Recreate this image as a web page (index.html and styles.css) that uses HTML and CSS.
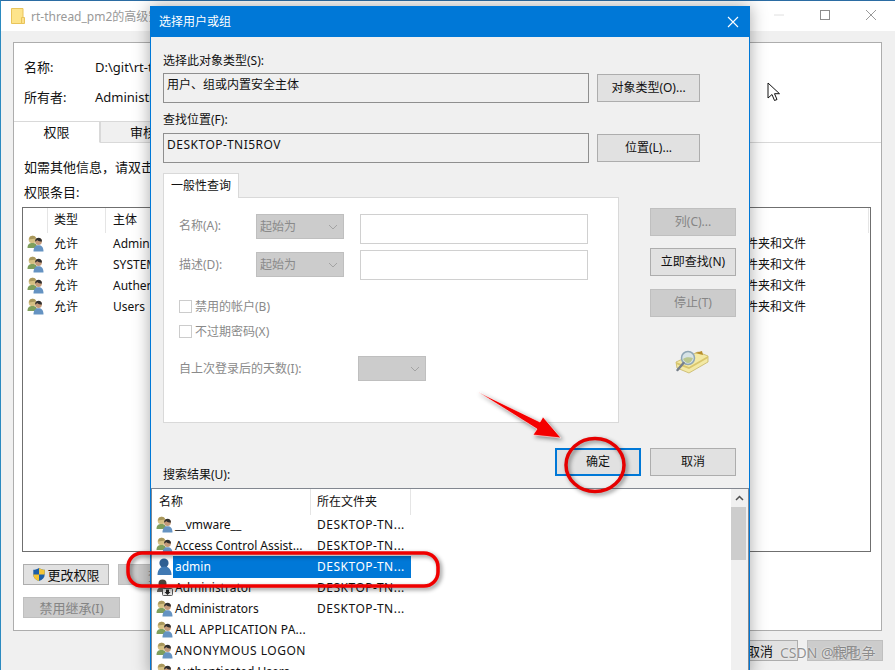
FILE: index.html
```html
<!DOCTYPE html>
<html lang="zh-CN">
    <head>
        <meta charset="UTF-8">
        <title>选择用户或组</title>
        <link rel="stylesheet" href="styles.css">
    </head>
    <body>
        <svg class="sprite" width="0" height="0">
            <symbol id="ico-group" viewBox="0 0 17 17">
                <circle cx="5.500" cy="4.500" r="3.800" fill="#d5c083"/>
                <path d="M2 4.500C2.300 1.800 4 .8 5.800.8 7.500.8 8.800 1.800 9 3.500 7 4 4 4.200 2 4.500z" fill="#a8975c"/>
                <path d="M.5 13c0-3.800 2-5 5-5s4.500 1.200 4.500 5z" fill="#7f9f5c"/>
                <circle cx="11.500" cy="6.500" r="3.400" fill="#c49a7a"/>
                <path d="M8 6.500C8.200 3.800 10 2.800 11.700 2.800s3.300 1.200 3.300 3.600c-1.800 0-3.900-.5-4.900-1.500C9.700 5.700 9 6.300 8 6.500z" fill="#2e2e2e"/>
                <path d="M6.500 16.500c0-4.500 2-6.300 5-6.300s5 1.800 5 6.300z" fill="#6593c2"/>
            </symbol>
            <symbol id="ico-user" viewBox="0 0 17 17">
                <circle cx="8" cy="5" r="4.600" fill="#2f5f92"/>
                <path d="M1.500 17c0-5.500 3-8.500 7-8.500s7 3 7 8.500z" fill="#4079b3"/>
            </symbol>
            <symbol id="ico-admin" viewBox="0 0 17 17">
                <circle cx="6.500" cy="4.500" r="4" fill="#4d453c"/>
                <path d="M1 13c0-3.500 2.200-5 5.500-5S12 9.500 12 13z" fill="#66635f"/>
                <rect x="6.500" y="9.500" width="10" height="7" rx="1" fill="#e8e8e8" stroke="#555"/>
                <path d="M10 10.500h3v2.500h1.500l-3 3-3-3H10z" fill="#222"/>
            </symbol>
            <symbol id="ico-shield" viewBox="0 0 16 16">
                <path d="M8 .5c2 1.500 4 2 6.500 2v5.500c0 3.500-2.500 6-6.500 7.500-4-1.500-6.500-4-6.500-7.500V2.500c2.500 0 4.500-.5 6.500-2z" fill="#1c5fa8"/>
                <path d="M8 .5v7.500h6.500V2.500c-2.500 0-4.500-.5-6.500-2zM8 8H1.500c0 3.500 2.500 6 6.500 7.500z" fill="#f5c534"/>
            </symbol>
            <symbol id="ico-find" viewBox="0 0 34 24">
                <path d="M1 12l22-10 10 4v6L14 23 2 18z" fill="#f3e9a5" stroke="#c6b566" stroke-width=".8"/>
                <path d="M1 12l13 5 19-11v2L14 19 1 14z" fill="#d9c66c"/>
                <path d="M20 3l7-2 1 4z" fill="#b88f2c"/>
                <circle cx="13" cy="8" r="6.500" fill="#d7e3e6" stroke="#8fa6b5" stroke-width="1.500"/>
                <path d="M8 9c2-2 7-2 10-1-1 3-3 5-5 5s-4-2-5-4z" fill="#b9c78f"/>
                <path d="M8.500 13L2.500 20" stroke="#77808a" stroke-width="2.500" stroke-linecap="round"/>
            </symbol>
            <symbol id="ico-folder" viewBox="0 0 14 16">
                <path d="M.5.500H12V15.500H.5z" fill="#fde48b" stroke="#e9c45a"/>
                <path d="M10.500 9.500h3v6h-3z" fill="#fbe08a" stroke="#e9c45a"/>
            </symbol>
            <symbol id="ico-chev" viewBox="0 0 10 6">
                <path d="M1 1l4 4 4-4" fill="none" stroke="#a3a3a3"/>
            </symbol>
        </svg>

        <div class="escritorio">
            <!-- ventana de atras -->
            <div class="ventana-atras">
                <div class="barra-atras">
                    <svg class="ico-folder"><use href="#ico-folder"/></svg>
                    <span class="titulo-atras">rt-thread_pm2的高级安全设置</span>
                    <span class="controles">
                        <svg width="12" height="12" viewBox="0 0 12 12"><path d="M1 6h10" stroke="#e0e0e0"/></svg>
                        <svg width="12" height="12" viewBox="0 0 12 12"><rect x="1.500" y="1.500" width="9" height="9" fill="none" stroke="#8c8c8c"/></svg>
                        <svg width="12" height="12" viewBox="0 0 12 12"><path d="M1 1l10 10M11 1L1 11" stroke="#9a9a9a"/></svg>
                    </span>
                </div>
                <div class="panel">
                    <div class="fila-info">
                        <span class="info-label">名称:</span><span>D:\git\rt-thread_pm2</span>
                    </div>
                    <div class="fila-info">
                        <span class="info-label">所有者:</span><span>Administrators</span>
                    </div>
                    <div class="tabs-atras">
                        <div class="tab-atras activo">权限</div>
                        <div class="tab-atras">审核</div>
                    </div>
                    <p class="texto ayuda">如需其他信息，请双击权限项目。</p>
                    <p class="texto entradas">权限条目:</p>
                    <div class="tabla">
                        <div class="tabla-cab">
                            <span class="c-ico"></span>
                            <span class="c-tipo">类型</span>
                            <span class="c-sujeto">主体</span>
                        </div>
                        <div class="tabla-fila">
                            <span class="c-ico"><svg class="ico"><use href="#ico-group"/></svg></span>
                            <span class="c-tipo">允许</span>
                            <span class="c-sujeto">Administrators</span>
                            <span class="c-aplica">此文件夹、子文件夹和文件</span>
                        </div>
                        <div class="tabla-fila">
                            <span class="c-ico"><svg class="ico"><use href="#ico-group"/></svg></span>
                            <span class="c-tipo">允许</span>
                            <span class="c-sujeto">SYSTEM</span>
                            <span class="c-aplica">此文件夹、子文件夹和文件</span>
                        </div>
                        <div class="tabla-fila">
                            <span class="c-ico"><svg class="ico"><use href="#ico-group"/></svg></span>
                            <span class="c-tipo">允许</span>
                            <span class="c-sujeto">Authenticated Users</span>
                            <span class="c-aplica">此文件夹、子文件夹和文件</span>
                        </div>
                        <div class="tabla-fila">
                            <span class="c-ico"><svg class="ico"><use href="#ico-group"/></svg></span>
                            <span class="c-tipo">允许</span>
                            <span class="c-sujeto">Users</span>
                            <span class="c-aplica">此文件夹、子文件夹和文件</span>
                        </div>
                    </div>
                    <div class="botones-tabla">
                        <button type="button" class="boton boton-cambiar"><svg class="ico-shield"><use href="#ico-shield"/></svg>更改权限</button>
                        <button type="button" class="boton apagado boton-ver">查看</button>
                    </div>
                    <button type="button" class="boton apagado boton-herencia">禁用继承(I)</button>
                </div>
                <div class="pie-atras">
                    <button type="button" class="boton boton-pie">确定</button>
                    <button type="button" class="boton boton-pie">取消</button>
                    <button type="button" class="boton apagado boton-pie">应用</button>
                </div>
            </div>

            <!-- dialogo -->
            <div class="dialogo">
                <div class="barra-dialogo">
                    <span>选择用户或组</span>
                    <svg width="12" height="12" viewBox="0 0 12 12"><path d="M1 1l10 10M11 1L1 11" stroke="#fff" stroke-width="1.100"/></svg>
                </div>
                <div class="cuerpo">
                    <p class="etiqueta">选择此对象类型(S):</p>
                    <div class="fila-campo">
                        <div class="campo">用户、组或内置安全主体</div>
                        <button type="button" class="boton boton-campo">对象类型(O)...</button>
                    </div>
                    <p class="etiqueta etiqueta-2">查找位置(F):</p>
                    <div class="fila-campo fila-campo-2">
                        <div class="campo mayus">DESKTOP-TNI5ROV</div>
                        <button type="button" class="boton boton-campo">位置(L)...</button>
                    </div>
                    <div class="medio">
                        <div class="consulta">
                            <div class="tab-consulta">一般性查询</div>
                            <div class="pane">
                                <div class="fila-form">
                                    <span class="form-label">名称(A):</span>
                                    <div class="selector"><span>起始为</span><svg class="chev"><use href="#ico-chev"/></svg></div>
                                    <div class="entrada"></div>
                                </div>
                                <div class="fila-form fila-form-2">
                                    <span class="form-label">描述(D):</span>
                                    <div class="selector"><span>起始为</span><svg class="chev"><use href="#ico-chev"/></svg></div>
                                    <div class="entrada"></div>
                                </div>
                                <div class="checks">
                                    <div class="check"><span class="caja"></span>禁用的帐户(B)</div>
                                    <div class="check"><span class="caja"></span>不过期密码(X)</div>
                                </div>
                                <div class="fila-dias">
                                    <span class="dias-label">自上次登录后的天数(I):</span>
                                    <div class="selector selector-dias"><span></span><svg class="chev"><use href="#ico-chev"/></svg></div>
                                </div>
                            </div>
                        </div>
                        <div class="acciones">
                            <button type="button" class="boton apagado boton-lado">列(C)...</button>
                            <button type="button" class="boton boton-lado">立即查找(N)</button>
                            <button type="button" class="boton apagado boton-lado">停止(T)</button>
                            <svg class="ico-find"><use href="#ico-find"/></svg>
                        </div>
                    </div>
                    <div class="pie-dialogo">
                        <span class="etiqueta-resultados">搜索结果(U):</span>
                        <div class="pie-botones">
                            <button type="button" class="boton boton-lado boton-ok">确定</button>
                            <button type="button" class="boton boton-lado">取消</button>
                        </div>
                    </div>
                </div>
                <div class="lista">
                    <div class="lista-main">
                        <div class="lista-cab">
                            <span class="cab-nombre">名称</span>
                            <span class="cab-carpeta">所在文件夹</span>
                        </div>
                        <div class="lista-fila">
                            <span class="l-ico"><svg class="ico"><use href="#ico-group"/></svg></span>
                            <span class="l-nombre">__vmware__</span>
                            <span class="l-carpeta mayus">DESKTOP-TN...</span>
                        </div>
                        <div class="lista-fila">
                            <span class="l-ico"><svg class="ico"><use href="#ico-group"/></svg></span>
                            <span class="l-nombre">Access Control Assist...</span>
                            <span class="l-carpeta mayus">DESKTOP-TN...</span>
                        </div>
                        <div class="lista-fila elegida">
                            <span class="l-ico"><svg class="ico"><use href="#ico-user"/></svg></span>
                            <span class="l-nombre">admin</span>
                            <span class="l-carpeta mayus">DESKTOP-TN...</span>
                        </div>
                        <div class="lista-fila">
                            <span class="l-ico"><svg class="ico"><use href="#ico-admin"/></svg></span>
                            <span class="l-nombre">Administrator</span>
                            <span class="l-carpeta mayus">DESKTOP-TN...</span>
                        </div>
                        <div class="lista-fila">
                            <span class="l-ico"><svg class="ico"><use href="#ico-group"/></svg></span>
                            <span class="l-nombre">Administrators</span>
                            <span class="l-carpeta mayus">DESKTOP-TN...</span>
                        </div>
                        <div class="lista-fila">
                            <span class="l-ico"><svg class="ico"><use href="#ico-group"/></svg></span>
                            <span class="l-nombre mayus-leve">ALL APPLICATION PA...</span>
                            <span class="l-carpeta"></span>
                        </div>
                        <div class="lista-fila">
                            <span class="l-ico"><svg class="ico"><use href="#ico-group"/></svg></span>
                            <span class="l-nombre mayus">ANONYMOUS LOGON</span>
                            <span class="l-carpeta"></span>
                        </div>
                        <div class="lista-fila">
                            <span class="l-ico"><svg class="ico"><use href="#ico-group"/></svg></span>
                            <span class="l-nombre">Authenticated Users</span>
                            <span class="l-carpeta"></span>
                        </div>
                    </div>
                    <div class="scroll">
                        <div class="scroll-arriba">
                            <svg width="9" height="6" viewBox="0 0 9 6"><path d="M1 5l3.500-3.500L8 5" fill="none" stroke="#505050" stroke-width="1.500"/></svg>
                        </div>
                        <div class="scroll-barra"></div>
                    </div>
                </div>
            </div>

            <!-- marcas rojas encima de la captura -->
            <svg class="marcas" width="895" height="670" viewBox="0 0 895 670">
                <rect x="128" y="553" width="310" height="33" rx="14" fill="none" stroke="#f00000" stroke-width="3.500"/>
                <ellipse cx="595" cy="465" rx="29" ry="26.500" fill="none" stroke="#e60000" stroke-width="3.500"/>
                <path d="M478 392l62 30 3-5 18 21-28-3 4-6z" fill="#f40000" stroke="#fff" stroke-width=".6"/>
            </svg>
            <svg class="cursor" width="14" height="20" viewBox="0 0 14 20">
                <path d="M1 1v15l4-3.500 2.500 6 2.500-1-2.500-5.800h5z" fill="#fff" stroke="#111"/>
            </svg>
            <span class="marca-agua">CSDN @根也争</span>
        </div>
    </body>
</html>
```

FILE: styles.css
```css
* {
    box-sizing: border-box;
    margin: 0;
    padding: 0;
}
body {
    width: 895px;
    height: 670px;
    overflow: hidden;
    font-family: "Noto Sans", "Noto Sans CJK SC", sans-serif;
    font-size: 12px;
    line-height: 16px;
    color: #111;
    background: #fff;
}
button {
    font: inherit;
}
.sprite {
    position: absolute;
}
.escritorio {
    position: relative;
    width: 895px;
    height: 670px;
    overflow: hidden;
}
.mayus {
    letter-spacing: 0.5px;
}
.mayus-leve {
    letter-spacing: 0.2px;
}

/* botones */
.boton {
    display: flex;
    align-items: center;
    justify-content: center;
    background: #e1e1e1;
    border: 1px solid #adadad;
    color: #111;
}
.boton.apagado {
    background: #cccccc;
    border-color: #bfbfbf;
    color: #858585;
}

/* ventana de atras */
.ventana-atras {
    position: absolute;
    left: 0;
    top: 0;
    width: 895px;
    height: 670px;
    background: #f0f0f0;
    border-top: 1px solid #2b6ca3;
    border-left: 1px solid #2b8ac0;
}
.barra-atras {
    display: flex;
    align-items: center;
    height: 30px;
    background: #fff;
    padding-left: 10px;
}
.ico-folder {
    width: 14px;
    height: 16px;
    margin-right: 6px;
}
.titulo-atras {
    color: #999;
    flex: 1;
    padding-top: 2px;
}
.controles {
    display: flex;
    gap: 34px;
    margin-right: 18px;
    margin-top: -2px;
}
.panel {
    margin: 11px 12px 0 12px;
    width: 869px;
    height: 589px;
    background: #fff;
    border: 1px solid #adadad;
    padding-top: 9px;
    font-size: 13px;
}
.fila-info {
    display: flex;
    height: 30px;
    padding-left: 10px;
    padding-top: 7px;
}
.info-label {
    width: 71px;
}
.tabs-atras {
    display: flex;
    height: 22px;
    margin-top: 9px;
    border-bottom: 1px solid #d9d9d9;
}
.tab-atras {
    width: 86px;
    height: 22px;
    text-align: center;
    line-height: 21px;
    background: #f0f0f0;
    border: 1px solid #d9d9d9;
}
.tab-atras.activo {
    background: #fff;
    border-bottom-color: #fff;
    border-left: none;
}
.texto {
    margin-left: 10px;
}
.ayuda {
    margin-top: 16px;
}
.entradas {
    margin-top: 9px;
}
.tabla {
    width: 849px;
    height: 345px;
    margin: 7px 0 0 8px;
    border: 1px solid #6f6f6f;
    font-size: 12px;
}
.tabla-cab {
    display: grid;
    grid-template-columns: 25px 58px 1fr;
    height: 25px;
    line-height: 23px;
    margin-right: 1px;
    border-right: 1px solid #e5e5e5;
}
.tabla-fila {
    display: grid;
    grid-template-columns: 25px 58px 1fr auto;
    height: 21px;
    line-height: 21px;
    padding-right: 64px;
}
.c-ico {
    padding-left: 4px;
    padding-top: 2px;
}
.tabla-cab .c-ico,
.tabla-cab .c-tipo {
    border-right: 1px solid #e5e5e5;
}
.c-tipo {
    padding-left: 6px;
}
.c-sujeto {
    padding-left: 7px;
}
.ico {
    display: block;
    width: 17px;
    height: 17px;
}
.botones-tabla {
    display: flex;
    gap: 9px;
    margin: 12px 0 0 9px;
}
.boton-cambiar {
    width: 86px;
    height: 21px;
}
.ico-shield {
    width: 14px;
    height: 15px;
    margin-right: 1px;
}
.boton-ver {
    width: 86px;
    height: 21px;
}
.boton-herencia {
    width: 97px;
    height: 21px;
    margin: 12px 0 0 9px;
}
.pie-atras {
    display: flex;
    justify-content: flex-end;
    gap: 9px;
    margin: 9px 12px 0 0;
    font-size: 13px;
}
.boton-pie {
    width: 76px;
    height: 21px;
}

/* dialogo */
.dialogo {
    position: absolute;
    left: 150px;
    top: 6px;
    width: 600px;
    height: 670px;
    background: #f0f0f0;
    border: 1px solid #0078d7;
    box-shadow: 0 0 16px rgba(0, 0, 0, 0.35);
}
.barra-dialogo {
    display: flex;
    align-items: center;
    justify-content: space-between;
    height: 30px;
    padding: 0 10px 0 8px;
    background: #0078d7;
    color: #fff;
}
.cuerpo {
    padding: 0 13px 0 12px;
}
.etiqueta {
    padding-top: 16px;
}
.etiqueta-2 {
    padding-top: 9px;
}
.fila-campo {
    display: flex;
    align-items: center;
    gap: 8px;
    margin-top: 4px;
}
.fila-campo-2 {
    margin-top: 5px;
}
.campo {
    width: 426px;
    height: 30px;
    padding: 3px 3px 0;
    border: 1px solid #8f8f8f;
}
.boton-campo {
    width: 103px;
    height: 28px;
    letter-spacing: 0;
}
.medio {
    display: flex;
    gap: 31px;
    margin-top: 10px;
}
.consulta {
    width: 456px;
}
.tab-consulta {
    position: relative;
    width: 76px;
    height: 25px;
    line-height: 23px;
    text-align: center;
    background: #fff;
    border: 1px solid #d9d9d9;
    border-bottom: none;
    z-index: 1;
}
.pane {
    height: 226px;
    margin-top: -1px;
    padding: 16px 0 0 15px;
    background: #fff;
    border: 1px solid #d9d9d9;
    color: #8a8a8a;
}
.fila-form {
    display: flex;
    align-items: flex-start;
}
.fila-form-2 {
    margin-top: 6px;
}
.form-label {
    width: 77px;
    line-height: 23px;
}
.fila-form-2 .form-label {
    margin-top: 3px;
}
.fila-form-2 .selector {
    margin-top: 2px;
}
.selector {
    display: flex;
    align-items: center;
    justify-content: space-between;
    width: 88px;
    height: 25px;
    padding: 0 5px 0 3px;
    background: #cccccc;
    border: 1px solid #bfbfbf;
}
.selector-dias {
    width: 68px;
}
.chev {
    width: 10px;
    height: 6px;
}
.entrada {
    width: 228px;
    height: 30px;
    margin-left: 16px;
    border: 1px solid #d0d0d0;
}
.checks {
    margin-top: 14px;
}
.check {
    display: flex;
    align-items: center;
    height: 25px;
}
.caja {
    width: 13px;
    height: 13px;
    margin-right: 3px;
    border: 1px solid #cccccc;
    background: #fff;
}
.fila-dias {
    display: flex;
    align-items: center;
    margin-top: 12px;
}
.dias-label {
    width: 179px;
    padding-top: 1px;
}
.acciones {
    display: flex;
    flex-direction: column;
    padding-top: 35px;
}
.boton-lado {
    width: 86px;
    height: 28px;
}
.acciones .boton-lado + .boton-lado {
    margin-top: 12px;
}
.acciones .boton-lado:nth-child(3) {
    margin-top: 13px;
}
.ico-find {
    width: 34px;
    height: 24px;
    margin: 33px 0 0 25px;
}
.pie-dialogo {
    display: flex;
    justify-content: space-between;
    height: 36px;
    margin-top: 25px;
}
.etiqueta-resultados {
    align-self: flex-end;
    margin-bottom: 1px;
}
.pie-botones {
    display: flex;
    gap: 9px;
}
.boton-ok {
    border: 2px solid #0078d7;
}
.lista {
    display: flex;
    height: 190px;
    margin-top: 4px;
    background: #fff;
    border-top: 1px solid #828790;
    border-right: 1px solid #828790;
    border-left: 1px solid #828790;
    overflow: hidden;
}
.lista-main {
    flex: 1;
}
.lista-cab {
    display: grid;
    grid-template-columns: 159px 100px;
    height: 25px;
    line-height: 26px;
}
.cab-nombre {
    padding-left: 7px;
    border-right: 1px solid #e5e5e5;
}
.cab-carpeta {
    padding-left: 6px;
    border-right: 1px solid #e5e5e5;
}
.lista-fila {
    display: grid;
    grid-template-columns: 21px 138px 100px;
    height: 21px;
    line-height: 22px;
}
.l-ico {
    padding: 2px 0 0 4px;
}
.l-nombre {
    padding-left: 2px;
    white-space: nowrap;
    overflow: hidden;
}
.l-carpeta {
    padding-left: 6px;
    white-space: nowrap;
}
.elegida .l-nombre,
.elegida .l-carpeta {
    background: #0078d7;
    color: #fff;
}
.scroll {
    width: 17px;
    background: #f0f0f0;
}
.scroll-arriba {
    display: flex;
    align-items: center;
    justify-content: center;
    height: 18px;
}
.scroll-barra {
    width: 15px;
    height: 53px;
    background: #cdcdcd;
}

/* cosas encima */
.marcas {
    position: absolute;
    left: 0;
    top: 0;
    filter: drop-shadow(2px 2px 2px rgba(0, 0, 0, 0.45));
}
.cursor {
    position: absolute;
    left: 767px;
    top: 82px;
}
.marca-agua {
    position: absolute;
    left: 780px;
    top: 644px;
    font-size: 14px;
    line-height: 18px;
    color: rgba(110, 110, 110, 0.75);
    text-shadow: 0 0 2px #fff;
}
```
